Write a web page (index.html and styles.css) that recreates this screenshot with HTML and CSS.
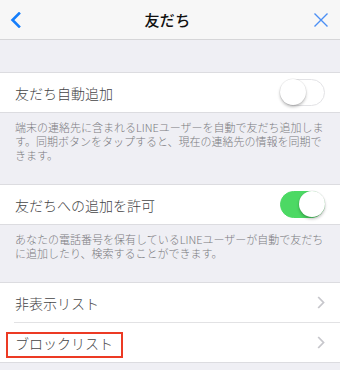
FILE: index.html
```html
<!DOCTYPE html>
<html lang="ja">
<head>
<meta charset="utf-8">
<link rel="stylesheet" href="styles.css">
</head>
<body>
<div class="screen">
  <header class="nav">
    <svg class="nav-back" width="12" height="16" viewBox="0 0 12 16"><path d="M9 1.5 L2.5 8 L9 14.5" fill="none" stroke="#157efb" stroke-width="2.6" stroke-linecap="square"/></svg>
    <div class="nav-title">友だち</div>
    <svg class="nav-close" width="16" height="16" viewBox="0 0 16 16"><path d="M1.5 1.5 L14.5 14.5 M14.5 1.5 L1.5 14.5" fill="none" stroke="#4b8ff5" stroke-width="1.4"/></svg>
  </header>
  <div class="spacer"></div>

  <section class="group">
    <div class="row">
      <span class="label">友だち自動追加</span>
      <span class="toggle"><span class="knob"></span></span>
    </div>
  </section>
  <p class="footer">端末の連絡先に含まれるLINEユーザーを自動で友だち追加します。同期ボタンをタップすると、現在の連絡先の情報を同期できます。</p>

  <section class="group">
    <div class="row">
      <span class="label">友だちへの追加を許可</span>
      <span class="toggle on"><span class="knob"></span></span>
    </div>
  </section>
  <p class="footer">あなたの電話番号を保有しているLINEユーザーが自動で友だちに追加したり、検索することができます。</p>

  <section class="group">
    <div class="row">
      <span class="label">非表示リスト</span>
      <svg class="chev" width="8" height="13" viewBox="0 0 8 13"><path d="M1.2 1 L6.5 6.5 L1.2 12" fill="none" stroke="#c7c7cc" stroke-width="1.8"/></svg>
    </div>
    <div class="sep"></div>
    <div class="row">
      <span class="label">ブロックリスト</span>
      <svg class="chev" width="8" height="13" viewBox="0 0 8 13"><path d="M1.2 1 L6.5 6.5 L1.2 12" fill="none" stroke="#c7c7cc" stroke-width="1.8"/></svg>
      <span class="highlight"></span>
    </div>
  </section>
</div>
</body>
</html>
```
FILE: styles.css
```css
html, body {
  margin: 0;
  padding: 0;
  background: #efeff4;
}
body {
  font-family: "Noto Sans CJK JP", "Noto Sans", sans-serif;
  width: 340px;
  height: 370px;
  overflow: hidden;
}
.screen {
  display: flex;
  flex-direction: column;
}
.nav {
  height: 39px;
  background: #f7f7f7;
  border-bottom: 1px solid #d6d6d8;
  display: flex;
  align-items: center;
  justify-content: space-between;
  padding: 0 10px 0 10px;
}
.nav-back {
  display: block;
}
.nav-title {
  font-size: 15px;
  font-weight: 500;
  color: #111;
  letter-spacing: 0.3px;
}
.nav-close {
  display: block;
  margin-right: 1px;
}
.spacer {
  height: 32px;
}
.group {
  background: #fff;
  border-top: 1px solid #dcdce0;
  border-bottom: 1px solid #dcdce0;
}
.row {
  position: relative;
  height: 39px;
  display: flex;
  align-items: center;
  justify-content: space-between;
  padding: 0 15px;
}
.label {
  font-size: 14px;
  font-weight: 300;
  color: #444446;
}
.sep {
  height: 1px;
  background: #e2e2e4;
  margin-left: 14px;
}
.footer {
  margin: 0;
  padding: 7px 14px 22px 15px;
  font-size: 11px;
  line-height: 14px;
  font-weight: 300;
  color: #7b7b80;
}
.toggle {
  position: relative;
  width: 45px;
  height: 27px;
  box-sizing: border-box;
  border-radius: 14px;
  background: #fff;
  border: 1.5px solid #e3e3e6;
}
.toggle .knob {
  position: absolute;
  top: -1px;
  left: -1px;
  width: 26px;
  height: 26px;
  border-radius: 50%;
  background: #fff;
  box-shadow: 0 2px 3px rgba(0,0,0,0.25), 0 0 0 0.5px rgba(0,0,0,0.08);
}
.toggle.on {
  background: #4cd964;
  border-color: #4cd964;
}
.toggle.on .knob {
  left: auto;
  right: -1px;
}
.chev {
  display: block;
}
.highlight {
  position: absolute;
  left: 6px;
  top: 9px;
  width: 117px;
  height: 26px;
  box-sizing: border-box;
  border: 2px solid #ec3a24;
}
```
